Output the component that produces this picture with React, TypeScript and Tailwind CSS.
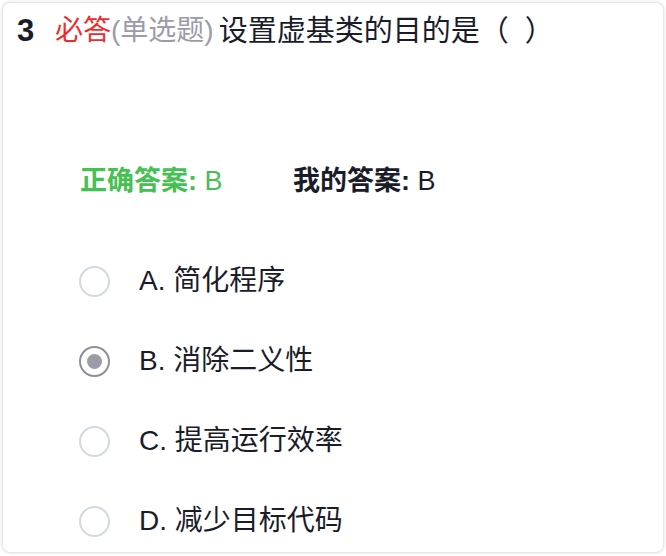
const font = { fontFamily: '"Liberation Sans", "Noto Sans CJK SC", sans-serif' }

const options = [
  { key: 'A', text: '简化程序' },
  { key: 'B', text: '消除二义性' },
  { key: 'C', text: '提高运行效率' },
  { key: 'D', text: '减少目标代码' },
]

function Radio({ checked }: { checked: boolean }) {
  if (checked) {
    return (
      <span className="flex h-[31px] w-[31px] shrink-0 items-center justify-center rounded-full border-2 border-[#8f8e9b] bg-white">
        <span className="h-[15px] w-[15px] rounded-full bg-[#9c9ba8]" />
      </span>
    )
  }
  return (
    <span className="block h-[31px] w-[31px] shrink-0 rounded-full border-2 border-[#d3d9e3] bg-white" />
  )
}

export default function App() {
  return (
    <div className="h-[556px] w-[666px] bg-white p-[3px] pb-[4px]" style={font}>
      <div className="h-full w-full rounded-[7px] bg-white shadow-[0_0_3px_1px_rgba(0,0,0,0.14)]">
        <div className="flex items-center pl-[14px] pt-[10px] text-[28px] leading-[36px]">
          <span className="w-[38px] text-[31px] font-bold text-[#1b1c2a]">3</span>
          <span className="text-[#f22a2a]">必答</span>
          <span className="text-[#9c9ba8]">(单选题)</span>
          <span className="ml-[5px] text-[29px] text-[#1b1c2a]">设置虚基类的目的是（&nbsp;&nbsp;）</span>
        </div>

        <div className="mt-[115px] flex items-center pl-[77px] text-[27px] leading-[34px]">
          <span className="w-[213px] text-[#45c152]">
            <b>正确答案:</b> B
          </span>
          <span className="text-[#1b1c2a]">
            <b>我的答案:</b> B
          </span>
        </div>

        <div className="mt-[67px] flex flex-col gap-[48px] pl-[76px]">
          {options.map((o) => (
            <div key={o.key} className="flex h-[32px] items-center">
              <Radio checked={o.key === 'B'} />
              <span className="ml-[29px] text-[28px] leading-[32px] text-[#1b1c2a]">
                {o.key}. {o.text}
              </span>
            </div>
          ))}
        </div>
      </div>
    </div>
  )
}
